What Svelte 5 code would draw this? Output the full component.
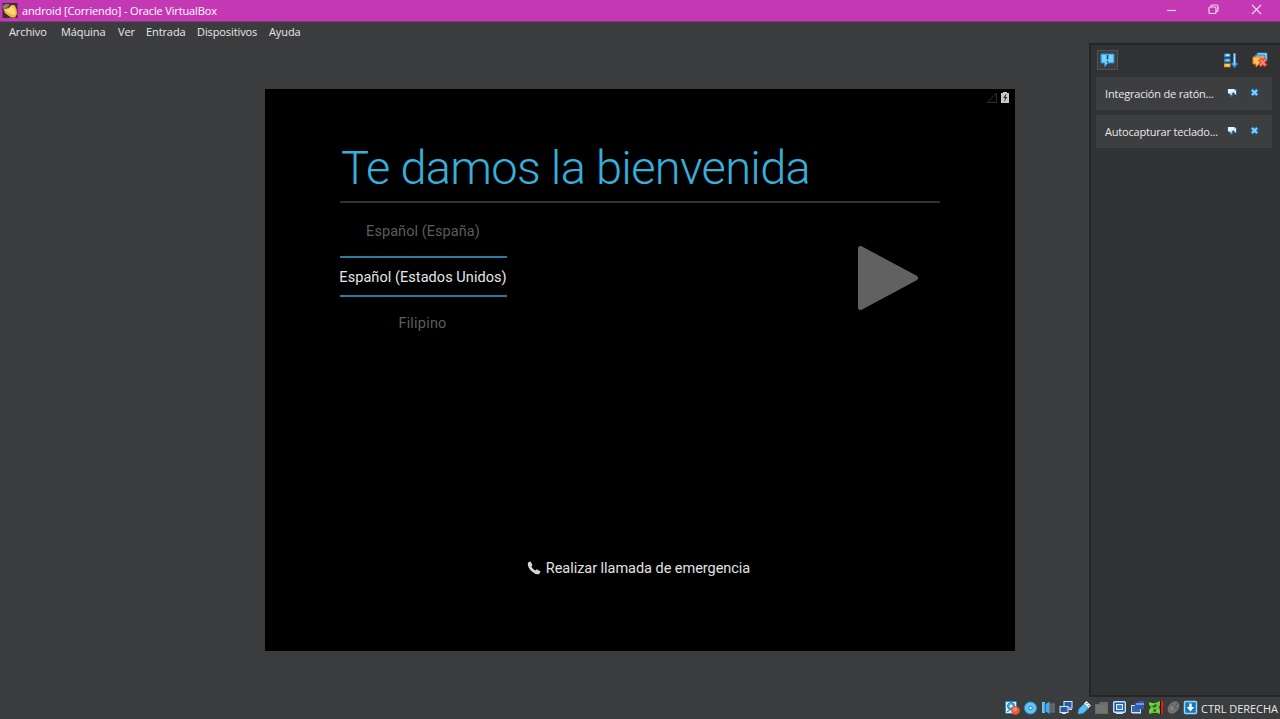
<script>
  const menu = [
    ['Archivo', 39], ['Máquina', 44], ['Ver', 15], ['Entrada', 38], ['Dispositivos', 59], ['Ayuda', 32]
  ];
  const notes = ['Integración de ratón...', 'Autocapturar teclado...'];
</script>

<div class="window">
  <header class="titlebar">
    <svg class="appicon" width="17" height="18" viewBox="0 0 17 18">
      <rect width="15" height="15" x="0.500" y="1" fill="#3b3030" />
      <path d="M0.500 4l3-2 4 0-1 3-5 2z" fill="#8a7d77" />
      <path d="M1.500 7l5-1 3-3 3 0 2 4 0.500 5-2 3.500H9L3 11z" fill="#f3b73f" />
      <path d="M3 8l4-1 3-3 3 4 0.500 4-2 1-4-2z" fill="#ffd979" />
    </svg>
    <span class="title">android [Corriendo] - Oracle VirtualBox</span>
    <svg class="controls" width="100" height="22" viewBox="0 0 100 22" fill="none" stroke="#f4d8f0" stroke-width="1.200">
      <path d="M7 10.500h9" />
      <rect x="49" y="7" width="7" height="6.500" rx="1" />
      <path d="M51 7v-1q0-1 1-1h4.500q1.500 0 1.500 1.500v4q0 1-1 1h-1" />
      <path d="M92 5l9 9M101 5l-9 9" />
    </svg>
  </header>

  <nav class="menubar">
    {#each menu as [label, width]}
      <span style="width: {width}px">{label}</span>
    {/each}
  </nav>

  <main class="workspace">
    <section class="guest">
      <div class="guest-status">
        <svg width="28" height="16" viewBox="0 0 28 16">
          <path d="M3 13.500L12.500 4v9.500z" fill="#050505" stroke="#2d2d2d" />
          <path d="M17 4h2V3h4v1h2v10h-8z" fill="#c8c8c8" />
          <path d="M22 5l-3 4h2l-1 4 3.500-5h-2l1-3z" fill="#333" />
        </svg>
      </div>
      <h1>Te damos la bienvenida</h1>
      <div class="setup">
        <div class="picker">
          <div class="option espana">Español (España)</div>
          <div class="option selected">Español (Estados Unidos)</div>
          <div class="option filipino">Filipino</div>
        </div>
        <svg class="next" width="62" height="66" viewBox="0 0 62 66">
          <path d="M3.500 3.500L58.500 33L3.500 62.500z" fill="#616161" stroke="#616161" stroke-width="5" stroke-linejoin="round" />
        </svg>
      </div>
      <div class="emergency">
        <svg width="14" height="14" viewBox="0 0 14 14">
          <path d="M1 1.500L3.500 0.500L5.500 4L4.300 5.400Q5.600 8 8.400 9.400L9.800 8.300L13.500 10.500L12.300 13Q9 14.300 4.900 10.600Q0 6 1 1.500z" fill="#d5d5d5" />
        </svg>
        <span>Realizar llamada de emergencia</span>
      </div>
    </section>

    <aside class="panel">
      <div class="tools">
        <span class="toggle">
          <svg width="15" height="15" viewBox="0 0 15 15">
            <path d="M1 1h13v9H8l-3.500 4v-4H1z" fill="#72d3fb" stroke="#168bd3" />
            <path d="M7.500 2v4.500M7.500 8v1.500" stroke="#143e5c" stroke-width="1.500" />
          </svg>
        </span>
        <svg class="sort" width="14" height="15" viewBox="0 0 14 15">
          <rect x="0" y="0.500" width="6.500" height="3.800" fill="#2684ce" /><path d="M1.500 2.200h4" stroke="#c2eaff" stroke-width="2" />
          <rect x="0" y="5.500" width="6.500" height="3.800" fill="#2684ce" /><path d="M1.500 7.200h4" stroke="#77cfff" stroke-width="2" />
          <rect x="0" y="10.500" width="6.500" height="3.800" fill="#e99838" /><path d="M1.500 12.200h4" stroke="#ffd575" stroke-width="2" />
          <path d="M10.500 0v12M8 10l2.500 3 2.500-3" fill="none" stroke="#3694de" stroke-width="2.600" />
          <path d="M10.500 1v11" stroke="#a7dcff" stroke-width="1.300" />
        </svg>
        <svg class="clear" width="16" height="16" viewBox="0 0 16 16">
          <path d="M5 1h10v8H5z" fill="#d9f2ff" stroke="#2383cf" />
          <path d="M3 3h10v7H3z" fill="#84caef" stroke="#226fb2" />
          <path d="M1 5h10v7H7l-3 3v-3H1z" fill="#ffc34f" stroke="#ed7827" />
          <path d="M7.500 7l6.500 7M14 7l-6.500 7" stroke="#cf3c25" stroke-width="4" />
          <path d="M8 7.500l5.500 6M13.500 7.500l-5.500 6" stroke="#ff8060" stroke-width="2" />
        </svg>
      </div>
      {#each notes as note}
        <div class="note">
          <span>{note}</span>
          <svg width="34" height="12" viewBox="0 0 34 12">
            <path d="M0 2h10v7L7.500 7 5 10H3l1-3H1z" fill="#286489" />
            <path d="M1 2h7L5 6.500H1zM9 3v5L5.500 4z" fill="#e2f5ff" />
            <path d="M2.500 6h3L4 9z" fill="#a8ddf7" />
            <path d="M24.500 2.500l6 6M30.500 2.500l-6 6" stroke="#1671b2" stroke-width="3.500" />
            <path d="M25 3l5 5M30 3l-5 5" stroke="#7fd1ff" stroke-width="2" />
          </svg>
        </div>
      {/each}
    </aside>
  </main>

  <footer class="statusbar">
    <svg width="194" height="18" viewBox="0 0 194 18">
      <g transform="translate(0 2)">
        <rect x="0.500" y="0.500" width="11" height="12" rx="1" fill="#d8f1ff" stroke="#258ccc" />
        <circle cx="6" cy="5" r="3.500" fill="#51afe2" stroke="#1776b5" /><circle cx="6" cy="5" r="1.300" fill="#fff" />
        <path d="M2 11l4-3" stroke="#245a86" />
        <circle cx="10.500" cy="9.500" r="4.300" fill="#ee5b31" /><circle cx="10" cy="8.500" r="2" fill="#ff8963" />
      </g>
      <circle cx="25.500" cy="9" r="6" fill="#61c6f6" stroke="#2494d5" />
      <circle cx="25.500" cy="9" r="1.800" fill="#f5fcff" stroke="#2271aa" />
      <g transform="translate(36 2)">
        <path d="M8 2h6v10H8z" fill="#555b60" /><path d="M9 4h5M9 7h5M9 10h5" stroke="#777" />
        <path d="M1 1h3v11H1z" fill="#69c1ef" /><path d="M3.500 4l5-3.500v12.500l-5-3.500z" fill="#4ba9e6" /><path d="M4.200 2v9" stroke="#1f699f" />
      </g>
      <g transform="translate(54 2)" stroke="#d7e7f3">
        <rect x="5" y="0.500" width="8" height="6.500" fill="#265bb2" /><rect x="1" y="5.500" width="8" height="6" fill="#265bb2" />
        <path d="M3 12.500h4M10 8.500h3" />
      </g>
      <g transform="translate(72 2)">
        <path d="M2 8l5-5 4.500 4-5 5-4.500 1-1-1z" fill="#57bdf2" stroke="#2e9ad9" />
        <path d="M9.500 0l4.500 4.500-2.500 2.500-4.500-4.500z" fill="#e8f7ff" /><path d="M9.500 2l1 1M11.500 4l1 1" stroke="#295671" />
      </g>
      <path d="M90 5h4l1-2h8v12H90z" fill="#6b6b6b" /><path d="M91 6h11v8H91z" fill="#747474" />
      <g transform="translate(108 2)">
        <rect x="0.700" y="0.700" width="11.600" height="10.600" rx="1" fill="#1856a6" stroke="#c3e1f6" stroke-width="1.400" />
        <rect x="3.500" y="3.500" width="6" height="5" fill="#3c80cc" stroke="#e3f3ff" /><path d="M3 12.500h7" stroke="#d1e7f6" />
      </g>
      <g transform="translate(126 2)">
        <rect x="0.500" y="4.500" width="9" height="7" fill="#3366b3" stroke="#c8ddf0" />
        <path d="M4 2h3V0h6v8H4z" fill="#3158b0" /><path d="M5 3h8" stroke="#659ee4" stroke-width="2" /><path d="M1 12h9" stroke="#e2edf6" />
      </g>
      <g transform="translate(144 2)">
        <path d="M0 0h11v13H0z" fill="#164c1b" />
        <path d="M0 1l3 1 3 0 5-2v4l-1 2 1 3v4l-3-1-4 0-4 1V9l2-3-2-2z" fill="#68c63d" />
        <path d="M3 5l4-2 1 2-3 2zM4 9l3-1 1 2-3 1z" fill="#216f22" /><path d="M1 2l3 2M1 11l2-3M7 9l3 2" stroke="#9ade67" />
        <path d="M12 0h2v13h-2z" fill="#ef1515" /><path d="M11.500 0v13" stroke="#390000" />
      </g>
      <g transform="translate(162 2)">
        <ellipse cx="6.500" cy="6.500" rx="5" ry="7" transform="rotate(40 6.500 6.500)" fill="#727272" />
        <path d="M4 3l6 5M8 5l3-3" stroke="#505050" /><path d="M4 9l2-4" stroke="#858585" stroke-width="2" />
      </g>
      <g transform="translate(179 2)">
        <rect x="0.500" y="0.500" width="12" height="12" rx="1" fill="#1676bd" stroke="#8fd7fc" stroke-width="1.500" />
        <path d="M5.300 2.500h2.400v3.500h2.600L6.500 10.500 2.700 6h2.600z" fill="#fff" />
      </g>
    </svg>
    <span>CTRL DERECHA</span>
  </footer>
</div>

<style>
  :global(body) { margin: 0; background: #3b3c3e; overflow: hidden; }
  * { box-sizing: border-box; }
  .window {
    width: 1280px; height: 719px; display: flex; flex-direction: column;
    background: #3b3c3e; color: #e9e9e9; overflow: hidden;
    font-family: "Open Sans", "Noto Sans", sans-serif; font-size: 11px; white-space: nowrap;
  }
  svg { display: block; flex: none; }
  .titlebar { height: 22px; flex: none; background: #c438b3; display: flex; align-items: center; padding: 0 20px 0 2px; border-bottom: 1px solid #87377f; }
  .title { margin-left: 3px; color: #fff; letter-spacing: -0.14px; line-height: 20px; }
  .controls { margin-left: auto; overflow: visible; }
  .menubar { height: 20px; flex: none; display: flex; gap: 13px; padding-left: 9px; line-height: 19px; border-bottom: 1px solid #38393b; letter-spacing: -0.1px; }
  .menubar span { flex: none; }
  .workspace { height: 655px; flex: none; display: flex; justify-content: space-between; padding-left: 265px; }
  .guest { width: 750px; height: 562px; margin-top: 47px; background: #000; font-family: Roboto, sans-serif; display: flex; flex-direction: column; }
  .guest-status { height: 16px; display: flex; justify-content: flex-end; padding-right: 3px; }
  h1 { margin: 31px 75px 0; height: 67px; border-bottom: 2px solid #333; font-size: 47px; font-weight: 300; line-height: 64px; letter-spacing: -0.7px; color: #36afdc; padding-left: 1px; }
  .setup { height: 138px; display: flex; justify-content: space-between; padding: 6px 96px 0 75px; }
  .picker { width: 167px; font-size: 14.500px; letter-spacing: 0.06px; text-align: center; color: #5c5c5c; }
  .option { height: 46px; line-height: 46px; display: flex; justify-content: center; }
  .selected { height: 41px; line-height: 39px; border: solid #287c9d; border-width: 2px 0; color: #e6e6e6; padding-right: 1px; }
  .espana { height: 47px; line-height: 45px; padding-right: 1px; }
  .filipino { line-height: 53px; letter-spacing: 0.2px; padding-right: 2px; }
  .next { margin-top: 36px; }
  .emergency { display: flex; align-items: center; justify-content: center; gap: 5px; margin-top: 217px; height: 20px; padding-right: 3px; font-size: 14.500px; letter-spacing: -0.04px; color: #e2e2e2; }
  .panel { width: 191px; background: #313234; border: solid #252628; border-width: 2px 0 2px 2px; margin-top: 1px; height: 654px; padding: 0 8px 0 5px; }
  .tools { height: 32px; display: flex; align-items: center; padding-bottom: 2px; }
  .toggle { width: 21px; height: 20px; margin-left: 1px; border: 1px solid #515254; background: #3c3d3f; display: flex; align-items: center; justify-content: center; }
  .sort { margin-left: auto; }
  .clear { margin: 0 4px 0 14px; }
  .note { height: 33px; margin-bottom: 5px; background: #3d3e40; display: flex; justify-content: space-between; align-items: center; padding: 0 11px 0 9px; }
  .note span { letter-spacing: -0.19px; }
  .note svg { margin-top: -1px; }
  .statusbar { height: 22px; flex: none; display: flex; align-items: center; justify-content: flex-end; gap: 2px; }
  .statusbar span { letter-spacing: -0.03px; width: 79px; padding-top: 1px; }
</style>
